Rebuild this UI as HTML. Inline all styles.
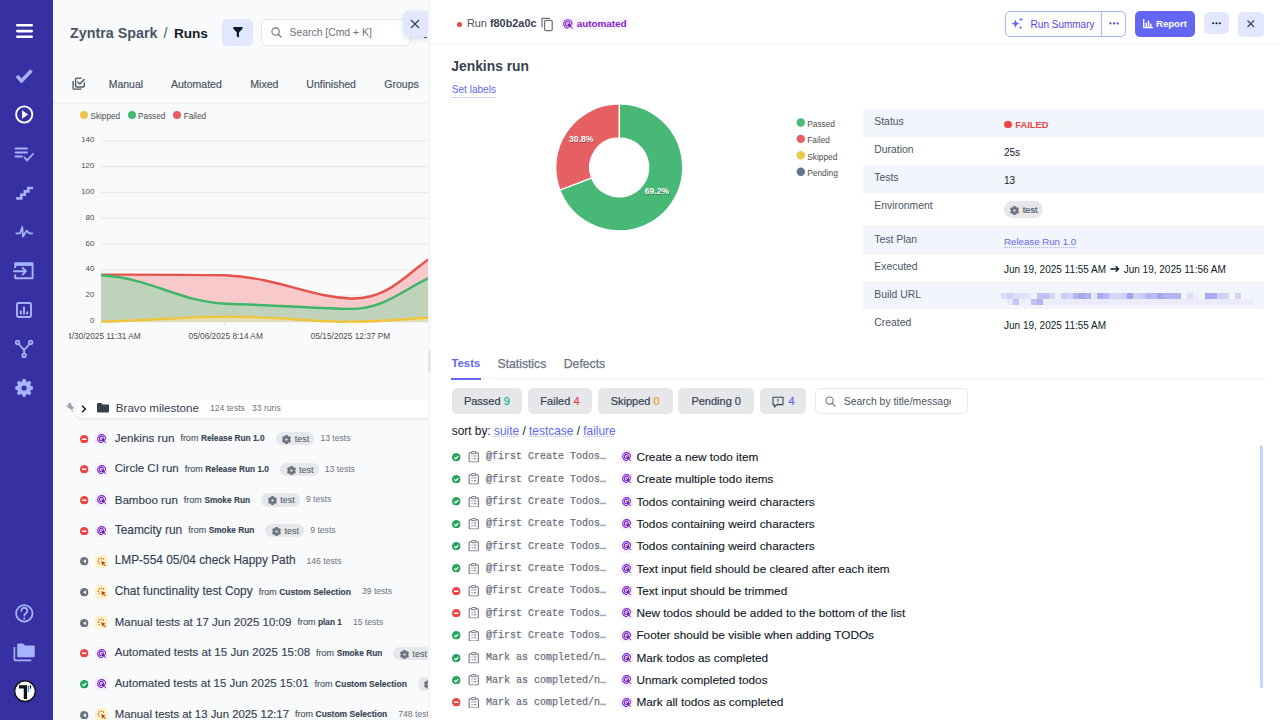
<!DOCTYPE html>
<html><head><meta charset="utf-8">
<style>
*{box-sizing:border-box;margin:0;padding:0}
html,body{width:1280px;height:720px;overflow:hidden;background:#f9fafb;font-family:"Liberation Sans",sans-serif;color:#374151}
.a{position:absolute}
.nw{white-space:nowrap}
#side{left:0;top:0;width:53px;height:720px;background:#3730a3}
#left{left:53px;top:0;width:375px;height:720px;background:#f9fafb;overflow:hidden}
#strip{left:428px;top:0;width:3px;height:720px;background:#f7f7f8}
#right{left:431px;top:0;width:849px;height:720px;background:#fff;overflow:hidden}

.tab{top:78px;font-size:10.5px;color:#4b5563;line-height:13px;-webkit-text-stroke:0.2px #4b5563}
.leg{top:110.8px;font-size:8.2px;color:#4d4d4d;line-height:11px}
.row{left:0;width:375px;height:20px}
.ib{left:42px;top:3.3px;width:13.3px;height:13.3px;border-radius:4px;display:flex;align-items:center;justify-content:center}
.rl{left:61.7px;top:1.8px;line-height:15px;display:flex;align-items:center}
.rt{font-size:11.6px;color:#374151;-webkit-text-stroke:0.15px #374151}
.rf{font-size:9px;color:#4b5563;margin-left:6px;position:relative;top:0.9px;-webkit-text-stroke:0.15px #4b5563}
.rf b{font-size:8.3px;color:#374151;font-weight:700}
.rb{display:inline-flex;align-items:center;gap:3.6px;height:13.3px;padding:0 5.2px 0 6.6px;background:#e5e7eb;border-radius:7px;font-size:9px;color:#4b5563;margin-left:11px;position:relative;top:0.7px}
.rc{font-size:8.6px;color:#6b7280;margin-left:11px;position:relative;top:0.6px}
.rb+.rc{margin-left:6px}

.lbl{font-size:10.4px;color:#4b5563;line-height:13px}
.val{font-size:10px;color:#111827;line-height:13px}

.tb2{top:356.6px;font-size:12.2px;line-height:14px;color:#6b7280;-webkit-text-stroke:0.25px #6b7280}
.chip{top:387.5px;height:26.3px;background:#e5e7eb;border-radius:5px;display:flex;align-items:center;justify-content:center;font-size:11px;color:#374151;white-space:nowrap;-webkit-text-stroke:0.2px currentColor}
.lk{color:#6366f1;text-decoration:underline dotted #a5b4fc;text-decoration-thickness:1px;text-underline-offset:1.3px}
.mono{font-family:"Liberation Mono",monospace;font-size:10px;line-height:13px;color:#6b7280;-webkit-text-stroke:0.25px #6b7280}
.ib2{width:13.3px;height:13.3px;border-radius:4px;background:#f7f1ff;display:flex;align-items:center;justify-content:center}
.ttl{font-size:11.8px;line-height:15px;color:#111827;-webkit-text-stroke:0.12px #111827}
</style></head><body>
<div id="side" class="a"><svg width="53" height="720" viewBox="0 0 53 720" style="position:absolute;left:0;top:0">
<g fill="#fff"><rect x="16" y="24" width="17" height="2.6" rx="1.3"/><rect x="16" y="29.8" width="17" height="2.6" rx="1.3"/><rect x="16" y="35.5" width="17" height="2.6" rx="1.3"/></g>
<path d="M17 76 L21.5 81 L31.5 70.5" stroke="#a5b4fc" stroke-width="3.4" fill="none" stroke-linecap="butt" stroke-linejoin="miter"/>
<circle cx="24.2" cy="114.5" r="8.1" stroke="#fff" stroke-width="1.9" fill="none"/>
<path d="M22 110.3 L28.2 114.5 L22 118.7 Z" fill="#fff"/>
<g stroke="#a5b4fc" stroke-width="1.8" fill="none" stroke-linecap="round"><path d="M15.5 148.5 H27"/><path d="M15.5 152.5 H27"/><path d="M15.5 156.5 H22"/><path d="M24.5 157.5 L27 160.3 L33 154"/></g>
<path d="M16.2 198.4 H21.3 V194.8 H24.8 V191.4 H28.3 V188 H33" stroke="#a5b4fc" stroke-width="2.6" fill="none" stroke-linejoin="miter"/>
<path d="M16.3 233.3 H20 L22.3 227 L23 236.5 L26.6 230.6 L29.3 233.3 H32.2" stroke="#a5b4fc" stroke-width="1.8" fill="none" stroke-linejoin="round" stroke-linecap="round"/>
<g stroke="#a5b4fc" stroke-width="1.9" fill="none" stroke-linejoin="round"><path d="M15.2 268 V263.2 H32.6 V278.3 H15.2 V274.5"/><path d="M15.2 264.6 H32.6" stroke-width="2.6"/><path d="M14 271.2 H26 M22.6 267.8 L26 271.2 L22.6 274.6" stroke-linecap="round"/></g>
<g stroke="#a5b4fc" stroke-width="1.9" fill="none"><rect x="17" y="303" width="14" height="14" rx="1.2"/><path d="M20.8 314.5 V310.5 M24 314.5 V306.5 M27.2 314.5 V311.5"/></g>
<g stroke="#a5b4fc" stroke-width="1.8" fill="none"><circle cx="17.6" cy="342.4" r="1.8"/><circle cx="30.6" cy="342.4" r="1.8"/><circle cx="24.1" cy="355.4" r="1.8"/><path d="M18.6 344 L24.1 350.2 L29.6 344 M24.1 350.2 V353.6"/></g>
<g fill="#a5b4fc" transform="translate(24.1 386.2) scale(0.8) translate(-24.1 -388.1)"><path d="M22.3 379.2 h3.6 l0.6 2.6 l1.9 0.8 l2.3 -1.4 l2.5 2.5 l-1.4 2.3 l0.8 1.9 l2.6 0.6 v3.6 l-2.6 0.6 l-0.8 1.9 l1.4 2.3 l-2.5 2.5 l-2.3 -1.4 l-1.9 0.8 l-0.6 2.6 h-3.6 l-0.6 -2.6 l-1.9 -0.8 l-2.3 1.4 l-2.5 -2.5 l1.4 -2.3 l-0.8 -1.9 l-2.6 -0.6 v-3.6 l2.6 -0.6 l0.8 -1.9 l-1.4 -2.3 l2.5 -2.5 l2.3 1.4 l1.9 -0.8 Z"/></g>
<circle cx="24.1" cy="388" r="2.6" fill="#3730a3"/>
<circle cx="24.3" cy="613.4" r="8.2" stroke="#a5b4fc" stroke-width="1.8" fill="none"/>
<path d="M21.3 610.8 a3 3 0 1 1 4.6 2.5 c-1 0.6 -1.6 1.1 -1.6 2.3" stroke="#a5b4fc" stroke-width="1.8" fill="none" stroke-linecap="round"/>
<circle cx="24.3" cy="618.6" r="1.1" fill="#a5b4fc"/>
<path d="M17.2 644.8 a1.3 1.3 0 0 1 1.3 -1.3 h4.6 l1.8 2 h8.5 a1.3 1.3 0 0 1 1.3 1.3 v9.1 a1.3 1.3 0 0 1 -1.3 1.3 h-14.9 a1.3 1.3 0 0 1 -1.3 -1.3 Z" fill="#a5b4fc"/>
<path d="M14.4 647 V659.2 a1.2 1.2 0 0 0 1.2 1.2 H31.2" stroke="#a5b4fc" stroke-width="1.6" fill="none"/>
<circle cx="25" cy="691.2" r="10.3" fill="#fff" stroke="#111" stroke-width="1.3"/>
<path d="M19 685.2 H27.1 V698.9 H23.75 V688.5 H19 Z" fill="#111"/>
<rect x="27.9" y="685.4" width="1.3" height="6.4" fill="#3b82f6"/><rect x="30" y="685.4" width="1.1" height="3.3" fill="#111"/>
</svg></div>
<svg width="0" height="0" style="position:absolute"><defs>
<symbol id="auto" viewBox="0 0 10 10"><path d="M9.1 4.9 A4.2 4.2 0 1 0 4.9 9.1" stroke="#7e22ce" stroke-width="1.15" fill="none" stroke-linecap="round"/><path d="M6.9 4.6 A2.2 2.2 0 1 0 4.6 6.9" stroke="#7e22ce" stroke-width="1.15" fill="none" stroke-linecap="round"/><path d="M4.3 4.3 L9.5 6.0 L7.6 7.0 L9.9 9.3 L9.3 9.9 L7.0 7.6 L6.0 9.5 Z" fill="#6b21a8"/></symbol>
<symbol id="manual" viewBox="0 0 10 10"><g fill="#c2410c"><circle cx="2.2" cy="2" r="0.75"/><circle cx="4.6" cy="1.3" r="0.7"/><circle cx="6.9" cy="2.1" r="0.7"/><circle cx="1.3" cy="4.4" r="0.75"/><circle cx="2.3" cy="6.7" r="0.75"/><path d="M4.3 4.2 L9.2 6 L7.2 6.9 L9.6 9.3 L9 9.9 L6.6 7.5 L5.8 9.4 Z"/></g></symbol>
<symbol id="failc" viewBox="0 0 10 10"><circle cx="5" cy="5" r="5" fill="#ef4444"/><rect x="2.3" y="4.2" width="5.4" height="1.6" rx="0.5" fill="#fff"/></symbol>
<symbol id="passc" viewBox="0 0 10 10"><circle cx="5" cy="5" r="5" fill="#23a55e"/><path d="M2.7 5.1 L4.3 6.7 L7.4 3.6" stroke="#fff" stroke-width="1.5" fill="none"/></symbol>
<symbol id="skipc" viewBox="0 0 10 10"><circle cx="5" cy="5" r="5" fill="#6b7280"/><path d="M7 2.6 L7 7.4 L3.6 5 Z" fill="#fff"/></symbol>
<symbol id="gear" viewBox="0 0 20 20"><path fill="#6b7280" stroke="#6b7280" stroke-width="1" stroke-linejoin="round" fill-rule="evenodd" d="M7.13 2.75 L7.92 0.22 L12.08 0.22 L12.87 2.75 L14.84 3.89 L17.43 3.31 L19.51 6.91 L17.72 8.86 L17.72 11.14 L19.51 13.09 L17.43 16.69 L14.84 16.11 L12.87 17.25 L12.08 19.78 L7.92 19.78 L7.13 17.25 L5.16 16.11 L2.57 16.69 L0.49 13.09 L2.28 11.14 L2.28 8.86 L0.49 6.91 L2.57 3.31 L5.16 3.89 Z M10 7 A3 3 0 1 0 10.01 7 Z"/></symbol>
<symbol id="clip" viewBox="0 0 12 12"><rect x="1.2" y="1.8" width="9.6" height="9.6" rx="1" stroke="#6b7280" stroke-width="1.1" fill="none"/><rect x="3.8" y="0.6" width="4.4" height="2.2" rx="0.5" stroke="#6b7280" stroke-width="1" fill="#fff"/><path d="M3.6 5.2h1.3M3.6 8h1.3M6.2 5.2h2.4M6.2 8h2.4" stroke="#6b7280" stroke-width="1.1"/></symbol>
</defs></svg><div id="left" class="a">
<div class="a nw" style="left:17px;top:24px;font-size:14.3px;font-weight:700;color:#4b5563;line-height:18px">Zyntra Spark<span style="font-weight:400;color:#4b5563;margin:0 0 0 6px">/</span><span style="color:#111827;font-size:13.6px;margin-left:6.5px">Runs</span></div>
<div class="a" style="left:169px;top:19px;width:31px;height:26.5px;background:#e0e7ff;border-radius:5px"><svg class="a" style="left:10.6px;top:8.4px" width="10" height="11" viewBox="0 0 10 11"><path d="M0.3 0 H9.5 V1.7 L6 5.6 V10.6 L3.8 9.6 V5.6 L0.3 1.7 Z" fill="#111827"/></svg></div>
<div class="a" style="left:208px;top:19.3px;width:149.5px;height:26.4px;background:#fff;border:1px solid #e5e7eb;border-radius:6px"><svg class="a" style="left:8.7px;top:6.6px" width="11" height="11" viewBox="0 0 11 11"><circle cx="4.6" cy="4.6" r="3.7" stroke="#6b7280" stroke-width="1.1" fill="none"/><path d="M7.3 7.3 L10 10" stroke="#6b7280" stroke-width="1.2" stroke-linecap="round"/></svg><span class="a nw" style="left:27.5px;top:5.5px;font-size:10.4px;color:#6b7280;line-height:13px">Search [Cmd + K]</span></div>
<div class="a" style="left:350px;top:11.2px;width:28px;height:25.5px;background:#e0e7ff;border-radius:6px 0 0 6px;box-shadow:0 2px 5px rgba(0,0,0,0.12)"><svg class="a" style="left:6.6px;top:7.6px" width="10" height="10" viewBox="0 0 10 10"><path d="M1 1 L9 9 M9 1 L1 9" stroke="#374151" stroke-width="1.2"/></svg></div>
<div class="a" style="left:371px;top:36.7px;width:3px;height:1px;background:#4b5563"></div>

<svg class="a" style="left:18.9px;top:76.8px" width="14" height="14" viewBox="0 0 14 14"><g stroke="#4b5563" stroke-width="1.35" fill="none" stroke-linecap="round" stroke-linejoin="round"><path d="M9.2 1.1 H4.8 a1.2 1.2 0 0 0 -1.2 1.2 V8.8 a1.2 1.2 0 0 0 1.2 1.2 H11.1 a1.2 1.2 0 0 0 1.2 -1.2 V5.9"/><path d="M5.8 4.9 L7.9 6.9 L12.2 2.6"/><path d="M1.1 4.3 V10.9 a1.2 1.2 0 0 0 1.2 1.2 H9"/></g></svg>
<div class="a nw tab" style="left:55.7px">Manual</div>
<div class="a nw tab" style="left:118px">Automated</div>
<div class="a nw tab" style="left:197.3px">Mixed</div>
<div class="a nw tab" style="left:253.3px">Unfinished</div>
<div class="a nw tab" style="left:331.3px">Groups</div>
<div class="a" style="left:0;top:103px;width:375px;height:1px;background:#eceef1"></div>

<div class="a" style="left:27px;top:111px;width:8.2px;height:8.2px;border-radius:50%;background:#edc44a"></div>
<div class="a nw leg" style="left:37.5px">Skipped</div>
<div class="a" style="left:74.7px;top:111px;width:8.2px;height:8.2px;border-radius:50%;background:#41b86e"></div>
<div class="a nw leg" style="left:85px">Passed</div>
<div class="a" style="left:119.8px;top:111px;width:8.2px;height:8.2px;border-radius:50%;background:#e85d61"></div>
<div class="a nw leg" style="left:130.7px">Failed</div>

<div id="chart" class="a" style="left:16px;top:125px;width:359px;height:225px;overflow:hidden"><svg width="359" height="225" viewBox="0 0 359 225" style="position:absolute;left:0;top:0;font-family:'Liberation Sans',sans-serif"><line x1="32" x2="371" y1="15.8" y2="15.8" stroke="#e5e7eb" stroke-width="1"/><text x="25.5" y="17.1" text-anchor="end" font-size="8" fill="#4d4d4d">140</text><line x1="32" x2="371" y1="41.6" y2="41.6" stroke="#e5e7eb" stroke-width="1"/><text x="25.5" y="42.9" text-anchor="end" font-size="8" fill="#4d4d4d">120</text><line x1="32" x2="371" y1="67.5" y2="67.5" stroke="#e5e7eb" stroke-width="1"/><text x="25.5" y="68.8" text-anchor="end" font-size="8" fill="#4d4d4d">100</text><line x1="32" x2="371" y1="93.3" y2="93.3" stroke="#e5e7eb" stroke-width="1"/><text x="25.5" y="94.6" text-anchor="end" font-size="8" fill="#4d4d4d">80</text><line x1="32" x2="371" y1="119.2" y2="119.2" stroke="#e5e7eb" stroke-width="1"/><text x="25.5" y="120.5" text-anchor="end" font-size="8" fill="#4d4d4d">60</text><line x1="32" x2="371" y1="145.0" y2="145.0" stroke="#e5e7eb" stroke-width="1"/><text x="25.5" y="146.3" text-anchor="end" font-size="8" fill="#4d4d4d">40</text><line x1="32" x2="371" y1="170.9" y2="170.9" stroke="#e5e7eb" stroke-width="1"/><text x="25.5" y="172.2" text-anchor="end" font-size="8" fill="#4d4d4d">20</text><line x1="32" x2="371" y1="196.8" y2="196.8" stroke="#e5e7eb" stroke-width="1"/><text x="25.5" y="198.1" text-anchor="end" font-size="8" fill="#4d4d4d">0</text>
<path d="M 32.0 149.6 C 81.0 149.6 121.0 149.5 156.0 150.3 C 211.0 152.9 241.0 172.2 281.6 173.5 C 321.0 174.8 341.0 145.1 363.0 132.2 L363 196.8 L32 196.8 Z" fill="#f7c9ca"/>
<path d="M 32.0 150.3 C 81.0 152.9 111.0 176.8 156.0 178.7 C 211.0 180.0 251.0 183.9 281.6 183.9 C 316.0 183.9 336.0 163.2 363.0 151.6 L363 196.8 L32 196.8 Z" fill="#bfd3bb"/>
<path d="M 32.0 196.8 C 91.0 194.9 121.0 191.6 156.0 191.6 C 211.0 191.6 241.0 196.8 281.6 196.8 C 321.0 196.8 341.0 192.9 363.0 192.7 L363 196.8 L32 196.8 Z" fill="#e4e0b3"/>
<path d="M 32.0 149.6 C 81.0 149.6 121.0 149.5 156.0 150.3 C 211.0 152.9 241.0 172.2 281.6 173.5 C 321.0 174.8 341.0 145.1 363.0 132.2" stroke="#e5534b" stroke-width="2.4" fill="none"/>
<path d="M 32.0 150.3 C 81.0 152.9 111.0 176.8 156.0 178.7 C 211.0 180.0 251.0 183.9 281.6 183.9 C 316.0 183.9 336.0 163.2 363.0 151.6" stroke="#3fb569" stroke-width="2.4" fill="none"/>
<path d="M 32.0 196.8 C 91.0 194.9 121.0 191.6 156.0 191.6 C 211.0 191.6 241.0 196.8 281.6 196.8 C 321.0 196.8 341.0 192.9 363.0 192.7" stroke="#f0c43c" stroke-width="2.4" fill="none"/>
<g stroke="#e5e7eb" stroke-width="1"><line x1="32" x2="32" y1="196.8" y2="201"/><line x1="156" x2="156" y1="196.8" y2="201"/><line x1="281.6" x2="281.6" y1="196.8" y2="201"/></g>
<g font-size="8.3" fill="#4d4d4d" text-anchor="middle"><text x="32.6" y="214.3">04/30/2025 11:31 AM</text><text x="156.7" y="214.3">05/06/2025 8:14 AM</text><text x="281.5" y="214.3">05/15/2025 12:37 PM</text></g>
</svg></div>

<div class="a" style="left:23.3px;top:398.8px;width:360px;height:19px;background:#fff;border-radius:5px;box-shadow:0 1px 3px rgba(0,0,0,0.1)"></div>
<svg class="a" style="left:12px;top:402px" width="10" height="11" viewBox="0 0 10 11"><polygon points="3.3,1.4 5.6,1.0 6.2,3.6 8.9,6.0 6.8,7.0 4.6,6.4 1.6,3.8 3.9,3.2" fill="#9ca3af" stroke="#9ca3af" stroke-width="0.6" stroke-linejoin="round"/><path d="M6.2 6.6 L7.8 9.6" stroke="#9ca3af" stroke-width="1"/></svg>
<svg class="a" style="left:28px;top:404.8px" width="6" height="8" viewBox="0 0 6 8"><path d="M1 0.8 L4.4 4 L1 7.2" stroke="#111827" stroke-width="1.4" fill="none"/></svg>
<svg class="a" style="left:43.7px;top:403.3px" width="12" height="9.5" viewBox="0 0 12 9.5"><path d="M0 1 a1 1 0 0 1 1 -1 H4.4 L5.6 1.4 H11 a1 1 0 0 1 1 1 V8.5 a1 1 0 0 1 -1 1 H1 a1 1 0 0 1 -1 -1 Z" fill="#374151"/></svg>
<div class="a nw" style="left:62.8px;top:400.7px;font-size:11.6px;color:#374151;line-height:14px">Bravo milestone</div>
<div class="a nw" style="left:157px;top:402.5px;font-size:8.6px;color:#6b7280;line-height:11px">124 tests&nbsp;&nbsp;&nbsp;33 runs</div>
<div class="a row" style="top:428.70px"><svg class="a" style="left:27px;top:6px" width="8.5" height="8.5"><use href="#failc"/></svg><div class="a ib" style="background:#f7f1ff"><svg width="9.5" height="9.5"><use href="#auto"/></svg></div><div class="a rl nw"><span class="rt" style="font-size:11.68px">Jenkins run</span><span class="rf">from <b>Release Run 1.0</b></span><span class="rb"><svg width="9" height="9" style="position:relative;top:0.9px"><use href="#gear"/></svg><span style="position:relative;top:0.8px">test</span></span><span class="rc">13 tests</span></div></div>
<div class="a row" style="top:459.37px"><svg class="a" style="left:27px;top:6px" width="8.5" height="8.5"><use href="#failc"/></svg><div class="a ib" style="background:#f7f1ff"><svg width="9.5" height="9.5"><use href="#auto"/></svg></div><div class="a rl nw"><span class="rt" style="font-size:11.54px">Circle CI run</span><span class="rf">from <b>Release Run 1.0</b></span><span class="rb"><svg width="9" height="9" style="position:relative;top:0.9px"><use href="#gear"/></svg><span style="position:relative;top:0.8px">test</span></span><span class="rc">13 tests</span></div></div>
<div class="a row" style="top:490.04px"><svg class="a" style="left:27px;top:6px" width="8.5" height="8.5"><use href="#failc"/></svg><div class="a ib" style="background:#f7f1ff"><svg width="9.5" height="9.5"><use href="#auto"/></svg></div><div class="a rl nw"><span class="rt" style="font-size:11.60px">Bamboo run</span><span class="rf">from <b>Smoke Run</b></span><span class="rb"><svg width="9" height="9" style="position:relative;top:0.9px"><use href="#gear"/></svg><span style="position:relative;top:0.8px">test</span></span><span class="rc">9 tests</span></div></div>
<div class="a row" style="top:520.71px"><svg class="a" style="left:27px;top:6px" width="8.5" height="8.5"><use href="#failc"/></svg><div class="a ib" style="background:#f7f1ff"><svg width="9.5" height="9.5"><use href="#auto"/></svg></div><div class="a rl nw"><span class="rt" style="font-size:11.91px">Teamcity run</span><span class="rf">from <b>Smoke Run</b></span><span class="rb"><svg width="9" height="9" style="position:relative;top:0.9px"><use href="#gear"/></svg><span style="position:relative;top:0.8px">test</span></span><span class="rc">9 tests</span></div></div>
<div class="a row" style="top:551.38px"><svg class="a" style="left:27px;top:6px" width="8.5" height="8.5"><use href="#skipc"/></svg><div class="a ib" style="background:#fef3c7"><svg width="9.5" height="9.5"><use href="#manual"/></svg></div><div class="a rl nw"><span class="rt" style="font-size:11.88px">LMP-554 05/04 check Happy Path</span><span class="rc">146 tests</span></div></div>
<div class="a row" style="top:582.05px"><svg class="a" style="left:27px;top:6px" width="8.5" height="8.5"><use href="#skipc"/></svg><div class="a ib" style="background:#fef3c7"><svg width="9.5" height="9.5"><use href="#manual"/></svg></div><div class="a rl nw"><span class="rt" style="font-size:11.88px">Chat functinality test Copy</span><span class="rf">from <b style="font-size:8.5px">Custom Selection</b></span><span class="rc">39 tests</span></div></div>
<div class="a row" style="top:612.72px"><svg class="a" style="left:27px;top:6px" width="8.5" height="8.5"><use href="#skipc"/></svg><div class="a ib" style="background:#fef3c7"><svg width="9.5" height="9.5"><use href="#manual"/></svg></div><div class="a rl nw"><span class="rt" style="font-size:11.53px">Manual tests at 17 Jun 2025 10:09</span><span class="rf">from <b>plan 1</b></span><span class="rc">15 tests</span></div></div>
<div class="a row" style="top:643.39px"><svg class="a" style="left:27px;top:6px" width="8.5" height="8.5"><use href="#failc"/></svg><div class="a ib" style="background:#f7f1ff"><svg width="9.5" height="9.5"><use href="#auto"/></svg></div><div class="a rl nw"><span class="rt" style="font-size:11.57px">Automated tests at 15 Jun 2025 15:08</span><span class="rf">from <b>Smoke Run</b></span><span class="rb"><svg width="9" height="9" style="position:relative;top:0.9px"><use href="#gear"/></svg><span style="position:relative;top:0.8px">test</span></span><span class="rc">13 tests</span></div></div>
<div class="a row" style="top:674.06px"><svg class="a" style="left:27px;top:6px" width="8.5" height="8.5"><use href="#passc"/></svg><div class="a ib" style="background:#f7f1ff"><svg width="9.5" height="9.5"><use href="#auto"/></svg></div><div class="a rl nw"><span class="rt" style="font-size:11.47px">Automated tests at 15 Jun 2025 15:01</span><span class="rf">from <b style="font-size:8.5px">Custom Selection</b></span><span class="rb"><svg width="9" height="9" style="position:relative;top:0.9px"><use href="#gear"/></svg><span style="position:relative;top:0.8px">test</span></span><span class="rc">13 tests</span></div></div>
<div class="a row" style="top:704.73px"><svg class="a" style="left:27px;top:6px" width="8.5" height="8.5"><use href="#skipc"/></svg><div class="a ib" style="background:#fef3c7"><svg width="9.5" height="9.5"><use href="#manual"/></svg></div><div class="a rl nw"><span class="rt" style="font-size:11.36px">Manual tests at 13 Jun 2025 12:17</span><span class="rf">from <b style="font-size:8.5px">Custom Selection</b></span><span class="rc">748 tests</span></div></div>

</div>
<div id="strip" class="a"><div class="a" style="left:0;top:350px;width:3px;height:21.7px;background:#e5e6ea;border-radius:1.5px"></div></div>
<div id="right" class="a">
<div class="a" style="left:26.2px;top:21.9px;width:5.2px;height:5.2px;border-radius:50%;background:#ef4444"></div>
<div class="a nw" style="left:35.9px;top:17px;font-size:10.9px;line-height:13px;color:#4b5563">Run <b style="color:#374151">f80b2a0c</b></div>
<svg class="a" style="left:109.5px;top:17px" width="13" height="15" viewBox="0 0 13 15"><path d="M1 9.7 V1.3 H8.6" stroke="#6b7280" stroke-width="1.25" fill="none" stroke-linecap="round"/><rect x="3.6" y="3.3" width="7.6" height="10.3" rx="1.3" stroke="#6b7280" stroke-width="1.25" fill="none"/></svg>
<div class="a" style="left:129.0px;top:16.7px;width:69.4px;height:13.6px;border-radius:4px;background:#faf5ff"></div>
<svg class="a" style="left:132.2px;top:18.6px" width="10" height="10"><use href="#auto"/></svg>
<div class="a nw" style="left:145.7px;top:17.2px;font-size:9.9px;line-height:13px;color:#7e22ce;font-weight:700">automated</div>
<div class="a" style="left:0;top:44.3px;width:849px;height:1px;background:#f3f4f6"></div>

<div class="a" style="left:573.6px;top:11.3px;width:121.6px;height:25.3px;border:1px solid #a5b4fc;border-radius:5px"></div>
<div class="a" style="left:669.6px;top:11.3px;width:1px;height:25.3px;background:#a5b4fc"></div>
<svg class="a" style="left:579.5px;top:17px" width="13" height="13" viewBox="0 0 13 13"><path d="M4.5 2.5 L5.6 5.6 L8.7 6.7 L5.6 7.8 L4.5 10.9 L3.4 7.8 L0.3 6.7 L3.4 5.6 Z" fill="#6366f1"/><path d="M10 0.3 L10.6 1.9 L12.2 2.5 L10.6 3.1 L10 4.7 L9.4 3.1 L7.8 2.5 L9.4 1.9 Z" fill="#6366f1"/><path d="M9.6 8.8 L10.1 10.1 L11.4 10.6 L10.1 11.1 L9.6 12.4 L9.1 11.1 L7.8 10.6 L9.1 10.1 Z" fill="#6366f1"/></svg>
<div class="a nw" style="left:599.6px;top:17.5px;font-size:10px;line-height:13px;color:#4f46e5">Run Summary</div>
<svg class="a" style="left:677.5px;top:22.2px" width="10" height="3"><circle cx="1.4" cy="1.4" r="1.1" fill="#4f46e5"/><circle cx="5" cy="1.4" r="1.1" fill="#4f46e5"/><circle cx="8.6" cy="1.4" r="1.1" fill="#4f46e5"/></svg>
<div class="a" style="left:704.0px;top:11.3px;width:60.4px;height:25.3px;border-radius:5px;background:#6366f1"></div>
<svg class="a" style="left:712px;top:19.3px" width="10" height="9.5" viewBox="0 0 10 9.5"><path d="M0.7 0.3 V8.6 H9.6" stroke="#fff" stroke-width="1.3" fill="none" stroke-linecap="round"/><path d="M3.2 7.9 V4.2 M5.5 7.9 V2.3 M7.8 7.9 V5.2" stroke="#fff" stroke-width="1.5" stroke-linecap="round"/></svg>
<div class="a nw" style="left:725.0px;top:16.6px;font-size:9.6px;line-height:13px;color:#fff;font-weight:700">Report</div>
<div class="a" style="left:772.8px;top:11.7px;width:25.7px;height:22.8px;border-radius:5px;background:#e0e7ff"></div>
<svg class="a" style="left:781.3px;top:21.5px" width="9" height="3"><circle cx="1.2" cy="1.2" r="1.05" fill="#111827"/><circle cx="4.5" cy="1.2" r="1.05" fill="#111827"/><circle cx="7.8" cy="1.2" r="1.05" fill="#111827"/></svg>
<div class="a" style="left:807.4px;top:11.7px;width:25.3px;height:24.9px;border-radius:5px;background:#e0e7ff"><svg class="a" style="left:9px;top:8.7px" width="7.5" height="7.5" viewBox="0 0 7.5 7.5"><path d="M0.5 0.5 L7 7 M7 0.5 L0.5 7" stroke="#374151" stroke-width="1.1"/></svg></div>

<div class="a nw" style="left:20.3px;top:57.8px;font-size:13.85px;line-height:17px;color:#374151;font-weight:700">Jenkins run</div>
<div class="a nw" style="left:20.7px;top:84.1px;font-size:10.1px;line-height:12px;color:#6366f1;border-bottom:1px dotted #a5b4fc;padding-bottom:1px">Set labels</div>
<svg class="a" style="left:0;top:0" width="849" height="340" viewBox="0 0 849 340" font-family="Liberation Sans, sans-serif">
<path d="M188.20 103.90 A63.5 63.5 0 1 1 128.87 190.03 L160.64 177.91 A29.5 29.5 0 1 0 188.20 137.90 Z" fill="#48b876" stroke="#fff" stroke-width="1.3"/>
<path d="M128.87 190.03 A63.5 63.5 0 0 1 188.20 103.90 L188.20 137.90 A29.5 29.5 0 0 0 160.64 177.91 Z" fill="#e65f62" stroke="#fff" stroke-width="1.3"/>
<g font-size="8.6" font-weight="bold" text-anchor="middle"><text x="150.7" y="142.5" fill="rgba(0,0,0,0.35)">30.8%</text><text x="226.5" y="194.9" fill="rgba(0,0,0,0.35)">69.2%</text><text x="150.20000000000005" y="141.8" fill="#fff">30.8%</text><text x="226" y="194.2" fill="#fff">69.2%</text></g>
<g font-size="8.3" fill="#4d4d4d"><circle cx="369.79999999999995" cy="122.5" r="4.2" fill="#48bb78"/><text x="376.29999999999995" y="126.7">Passed</text>
<circle cx="369.79999999999995" cy="138.9" r="4.2" fill="#e85d61"/><text x="376.29999999999995" y="143.1">Failed</text>
<circle cx="369.79999999999995" cy="155.3" r="4.2" fill="#ecc94b"/><text x="376.29999999999995" y="159.5">Skipped</text>
<circle cx="369.79999999999995" cy="171.7" r="4.2" fill="#64748b"/><text x="376.29999999999995" y="175.9">Pending</text></g>
</svg><div class="a" style="left:432.0px;top:109px;width:400.5px;height:27.6px;background:#f2f5fc"></div><div class="a nw lbl" style="left:443.3px;top:115.2px">Status</div><div class="a nw lbl" style="left:443.3px;top:142.8px">Duration</div><div class="a" style="left:432.0px;top:165px;width:400.5px;height:27.9px;background:#f2f5fc"></div><div class="a nw lbl" style="left:443.3px;top:171.2px">Tests</div><div class="a nw lbl" style="left:443.3px;top:199.1px">Environment</div><div class="a" style="left:432.0px;top:226.3px;width:400.5px;height:27.7px;background:#f2f5fc"></div><div class="a nw lbl" style="left:443.3px;top:232.5px">Test Plan</div><div class="a nw lbl" style="left:443.3px;top:260.2px">Executed</div><div class="a" style="left:432.0px;top:281.7px;width:400.5px;height:27.6px;background:#f2f5fc"></div><div class="a nw lbl" style="left:443.3px;top:287.9px">Build URL</div><div class="a nw lbl" style="left:443.3px;top:315.5px">Created</div>
<div class="a" style="left:573.4px;top:120.9px;width:7.2px;height:7.2px;border-radius:50%;background:#ef4444"></div>
<div class="a nw val" style="left:584.2px;top:118px;color:#ef4444;font-weight:700;font-size:9.4px">FAILED</div>
<div class="a nw val" style="left:573.0px;top:146.3px">25s</div>
<div class="a nw val" style="left:573.0px;top:174.2px">13</div>
<div class="a nw" style="left:572.9px;top:201px;height:16.8px;width:39px;border-radius:9px;background:#e5e7eb;"><svg class="a" style="left:6.3px;top:4.6px" width="9" height="9"><use href="#gear"/></svg><span class="a" style="left:18.9px;top:3px;font-size:9.2px;color:#4b5563;line-height:12px;-webkit-text-stroke:0.15px #4b5563">test</span></div>
<div class="a nw val" style="left:573.0px;top:235.5px;color:#6366f1;font-size:9.7px;border-bottom:1px dotted #a5b4fc;line-height:11px;padding-bottom:0.5px">Release Run 1.0</div>
<div class="a nw val" style="left:573.0px;top:263px">Jun 19, 2025 11:55 AM <svg width="10" height="8" viewBox="0 0 10 8" style="vertical-align:0px;margin:0 1px"><path d="M0.5 4 H8.3 M5.6 1.3 L8.6 4 L5.6 6.7" stroke="#111827" stroke-width="1.3" fill="none"/></svg> Jun 19, 2025 11:56 AM</div>
<div class="a nw val" style="left:573.0px;top:318.8px">Jun 19, 2025 11:55 AM</div>

<svg class="a" style="left:570.3px;top:292.9px" width="252" height="12" viewBox="0 0 252 12" shape-rendering="crispEdges"><rect x="0" y="0" width="6" height="6" fill="#dcdcf7"/><rect x="6" y="0" width="6" height="6" fill="#cfd0f6"/><rect x="12" y="0" width="6" height="6" fill="#dfe0f8"/><rect x="18" y="0" width="6" height="6" fill="#e0e1f8"/><rect x="24" y="0" width="6" height="6" fill="#e4e5f9"/><rect x="30" y="0" width="6" height="6" fill="#f3f3fc"/><rect x="36" y="0" width="6" height="6" fill="#bfc1f3"/><rect x="42" y="0" width="6" height="6" fill="#bfc1f3"/><rect x="48" y="0" width="6" height="6" fill="#d3d4f6"/><rect x="54" y="0" width="6" height="6" fill="#f0f1fc"/><rect x="60" y="0" width="6" height="6" fill="#c9caf5"/><rect x="66" y="0" width="6" height="6" fill="#d5d6f7"/><rect x="72" y="0" width="6" height="6" fill="#b3b5f1"/><rect x="78" y="0" width="6" height="6" fill="#a3a6ef"/><rect x="84" y="0" width="6" height="6" fill="#b1b3f1"/><rect x="90" y="0" width="6" height="6" fill="#e6e7f9"/><rect x="96" y="0" width="6" height="6" fill="#a8abf0"/><rect x="102" y="0" width="6" height="6" fill="#b6b8f2"/><rect x="108" y="0" width="6" height="6" fill="#d3d4f6"/><rect x="114" y="0" width="6" height="6" fill="#d6d7f7"/><rect x="120" y="0" width="6" height="6" fill="#cfd0f6"/><rect x="126" y="0" width="6" height="6" fill="#9fa2ee"/><rect x="132" y="0" width="6" height="6" fill="#d0d1f6"/><rect x="138" y="0" width="6" height="6" fill="#cbccf5"/><rect x="144" y="0" width="6" height="6" fill="#b5b7f2"/><rect x="150" y="0" width="6" height="6" fill="#b8baf2"/><rect x="156" y="0" width="6" height="6" fill="#a3a6ef"/><rect x="162" y="0" width="6" height="6" fill="#b0b2f1"/><rect x="168" y="0" width="6" height="6" fill="#b3b5f1"/><rect x="174" y="0" width="6" height="6" fill="#b3b5f1"/><rect x="180" y="0" width="6" height="6" fill="#f2f3fc"/><rect x="186" y="0" width="6" height="6" fill="#dedff8"/><rect x="192" y="0" width="6" height="6" fill="#eeeffb"/><rect x="198" y="0" width="6" height="6" fill="#f2f3fc"/><rect x="204" y="0" width="6" height="6" fill="#a5a8ef"/><rect x="210" y="0" width="6" height="6" fill="#a9acf0"/><rect x="216" y="0" width="6" height="6" fill="#cfd0f6"/><rect x="222" y="0" width="6" height="6" fill="#d3d4f6"/><rect x="228" y="0" width="6" height="6" fill="#f2f3fc"/><rect x="234" y="0" width="6" height="6" fill="#d2d3f6"/><rect x="0" y="6" width="6" height="6" fill="#f2f3fc"/><rect x="6" y="6" width="6" height="6" fill="#e8e8fa"/><rect x="12" y="6" width="6" height="6" fill="#c3c4f4"/><rect x="18" y="6" width="6" height="6" fill="#eeeffb"/><rect x="24" y="6" width="6" height="6" fill="#eeeffb"/><rect x="30" y="6" width="6" height="6" fill="#bfc1f3"/><rect x="36" y="6" width="6" height="6" fill="#b3b5f1"/><rect x="42" y="6" width="6" height="6" fill="#ebebfa"/><rect x="48" y="6" width="6" height="6" fill="#ebebfa"/><rect x="54" y="6" width="6" height="6" fill="#ebebfa"/><rect x="60" y="6" width="6" height="6" fill="#ebebfa"/><rect x="66" y="6" width="6" height="6" fill="#ebebfa"/><rect x="72" y="6" width="6" height="6" fill="#ebebfa"/><rect x="78" y="6" width="6" height="6" fill="#ebebfa"/><rect x="84" y="6" width="6" height="6" fill="#ebebfa"/><rect x="90" y="6" width="6" height="6" fill="#ebebfa"/><rect x="96" y="6" width="6" height="6" fill="#ebebfa"/><rect x="102" y="6" width="6" height="6" fill="#ebebfa"/><rect x="108" y="6" width="6" height="6" fill="#ebebfa"/><rect x="114" y="6" width="6" height="6" fill="#ebebfa"/><rect x="120" y="6" width="6" height="6" fill="#ebebfa"/><rect x="126" y="6" width="6" height="6" fill="#ebebfa"/><rect x="132" y="6" width="6" height="6" fill="#ebebfa"/><rect x="138" y="6" width="6" height="6" fill="#ebebfa"/><rect x="144" y="6" width="6" height="6" fill="#ebebfa"/><rect x="150" y="6" width="6" height="6" fill="#ebebfa"/><rect x="156" y="6" width="6" height="6" fill="#ebebfa"/><rect x="162" y="6" width="6" height="6" fill="#ebebfa"/><rect x="168" y="6" width="6" height="6" fill="#ebebfa"/><rect x="174" y="6" width="6" height="6" fill="#ebebfa"/><rect x="180" y="6" width="6" height="6" fill="#ebebfa"/><rect x="186" y="6" width="6" height="6" fill="#ebebfa"/><rect x="192" y="6" width="6" height="6" fill="#ebebfa"/><rect x="198" y="6" width="6" height="6" fill="#ebebfa"/><rect x="204" y="6" width="6" height="6" fill="#ebebfa"/><rect x="210" y="6" width="6" height="6" fill="#ebebfa"/><rect x="216" y="6" width="6" height="6" fill="#ebebfa"/><rect x="222" y="6" width="6" height="6" fill="#ebebfa"/><rect x="228" y="6" width="6" height="6" fill="#ebebfa"/><rect x="234" y="6" width="6" height="6" fill="#ebebfa"/><rect x="240" y="6" width="6" height="6" fill="#ebebfa"/><rect x="246" y="6" width="6" height="6" fill="#ebebfa"/></svg><div class="a nw" style="left:20.5px;top:355.5px;font-size:11.3px;line-height:14px;color:#6366f1;font-weight:700">Tests</div>
<div class="a nw tb2" style="left:66.5px">Statistics</div>
<div class="a nw tb2" style="left:132.8px">Defects</div>
<div class="a" style="left:20.0px;top:378px;width:814px;height:1px;background:#f3f4f6"></div>
<div class="a" style="left:20.0px;top:377.6px;width:29.6px;height:2px;background:#6366f1"></div>

<div class="a chip" style="left:20.7px;width:70.3px">Passed&nbsp;<span style="color:#10b981">9</span></div>
<div class="a chip" style="left:97.0px;width:63.9px">Failed&nbsp;<span style="color:#ef4444">4</span></div>
<div class="a chip" style="left:166.5px;width:75.2px">Skipped&nbsp;<span style="color:#f59e0b">0</span></div>
<div class="a chip" style="left:247.4px;width:75.6px">Pending 0</div>
<div class="a chip" style="left:329.2px;width:45.9px;color:#6366f1"><svg width="12" height="12" viewBox="0 0 12 12" style="margin-right:5px;position:relative;top:1px"><path d="M1 1.2 H11 V8.6 H5 L2.4 11 V8.6 H1 Z" stroke="#374151" stroke-width="1.05" fill="none" stroke-linejoin="round"/><path d="M6 3 V5.6 M6 6.8 V7.4" stroke="#374151" stroke-width="1.05"/></svg>4</div>
<div class="a" style="left:384.3px;top:387.5px;width:152.7px;height:26.3px;border:1px solid #e5e7eb;border-radius:5px;background:#fff;overflow:hidden"><svg class="a" style="left:9px;top:7px" width="11" height="11" viewBox="0 0 11 11"><circle cx="4.6" cy="4.6" r="3.6" stroke="#6b7280" stroke-width="1.1" fill="none"/><path d="M7.3 7.3 L10 10" stroke="#6b7280" stroke-width="1.2" stroke-linecap="round"/></svg><span class="a nw" style="left:27.5px;top:6px;width:107px;overflow:hidden;font-size:10.4px;color:#4b5563;line-height:13px">Search by title/message</span></div>

<div class="a nw" style="left:20.7px;top:423.5px;font-size:11.9px;line-height:15px;color:#111827">sort by: <span class="lk">suite</span> / <span class="lk">testcase</span> / <span class="lk">failure</span></div>
<svg class="a" style="left:21.0px;top:452.5px" width="8.6" height="8.6"><use href="#passc"/></svg><svg class="a" style="left:37.0px;top:451.0px" width="11.5" height="11.5"><use href="#clip"/></svg><div class="a nw mono" style="left:55.0px;top:450.3px">@first Create Todos…</div><div class="a ib2" style="left:189.0px;top:450.2px"><svg width="9.5" height="9.5"><use href="#auto"/></svg></div><div class="a nw ttl" style="left:205.4px;top:449.8px">Create a new todo item</div>
<svg class="a" style="left:21.0px;top:474.8px" width="8.6" height="8.6"><use href="#passc"/></svg><svg class="a" style="left:37.0px;top:473.3px" width="11.5" height="11.5"><use href="#clip"/></svg><div class="a nw mono" style="left:55.0px;top:472.6px">@first Create Todos…</div><div class="a ib2" style="left:189.0px;top:472.5px"><svg width="9.5" height="9.5"><use href="#auto"/></svg></div><div class="a nw ttl" style="left:205.4px;top:472.1px">Create multiple todo items</div>
<svg class="a" style="left:21.0px;top:497.2px" width="8.6" height="8.6"><use href="#passc"/></svg><svg class="a" style="left:37.0px;top:495.7px" width="11.5" height="11.5"><use href="#clip"/></svg><div class="a nw mono" style="left:55.0px;top:495.0px">@first Create Todos…</div><div class="a ib2" style="left:189.0px;top:494.9px"><svg width="9.5" height="9.5"><use href="#auto"/></svg></div><div class="a nw ttl" style="left:205.4px;top:494.5px">Todos containing weird characters</div>
<svg class="a" style="left:21.0px;top:519.5px" width="8.6" height="8.6"><use href="#passc"/></svg><svg class="a" style="left:37.0px;top:518.0px" width="11.5" height="11.5"><use href="#clip"/></svg><div class="a nw mono" style="left:55.0px;top:517.3px">@first Create Todos…</div><div class="a ib2" style="left:189.0px;top:517.2px"><svg width="9.5" height="9.5"><use href="#auto"/></svg></div><div class="a nw ttl" style="left:205.4px;top:516.8px">Todos containing weird characters</div>
<svg class="a" style="left:21.0px;top:541.8px" width="8.6" height="8.6"><use href="#passc"/></svg><svg class="a" style="left:37.0px;top:540.3px" width="11.5" height="11.5"><use href="#clip"/></svg><div class="a nw mono" style="left:55.0px;top:539.6px">@first Create Todos…</div><div class="a ib2" style="left:189.0px;top:539.5px"><svg width="9.5" height="9.5"><use href="#auto"/></svg></div><div class="a nw ttl" style="left:205.4px;top:539.1px">Todos containing weird characters</div>
<svg class="a" style="left:21.0px;top:564.2px" width="8.6" height="8.6"><use href="#passc"/></svg><svg class="a" style="left:37.0px;top:562.7px" width="11.5" height="11.5"><use href="#clip"/></svg><div class="a nw mono" style="left:55.0px;top:562.0px">@first Create Todos…</div><div class="a ib2" style="left:189.0px;top:561.9px"><svg width="9.5" height="9.5"><use href="#auto"/></svg></div><div class="a nw ttl" style="left:205.4px;top:561.5px">Text input field should be cleared after each item</div>
<svg class="a" style="left:21.0px;top:586.5px" width="8.6" height="8.6"><use href="#failc"/></svg><svg class="a" style="left:37.0px;top:585.0px" width="11.5" height="11.5"><use href="#clip"/></svg><div class="a nw mono" style="left:55.0px;top:584.3px">@first Create Todos…</div><div class="a ib2" style="left:189.0px;top:584.2px"><svg width="9.5" height="9.5"><use href="#auto"/></svg></div><div class="a nw ttl" style="left:205.4px;top:583.8px">Text input should be trimmed</div>
<svg class="a" style="left:21.0px;top:608.8px" width="8.6" height="8.6"><use href="#failc"/></svg><svg class="a" style="left:37.0px;top:607.3px" width="11.5" height="11.5"><use href="#clip"/></svg><div class="a nw mono" style="left:55.0px;top:606.6px">@first Create Todos…</div><div class="a ib2" style="left:189.0px;top:606.5px"><svg width="9.5" height="9.5"><use href="#auto"/></svg></div><div class="a nw ttl" style="left:205.4px;top:606.1px">New todos should be added to the bottom of the list</div>
<svg class="a" style="left:21.0px;top:631.1px" width="8.6" height="8.6"><use href="#passc"/></svg><svg class="a" style="left:37.0px;top:629.6px" width="11.5" height="11.5"><use href="#clip"/></svg><div class="a nw mono" style="left:55.0px;top:628.9px">@first Create Todos…</div><div class="a ib2" style="left:189.0px;top:628.8px"><svg width="9.5" height="9.5"><use href="#auto"/></svg></div><div class="a nw ttl" style="left:205.4px;top:628.4px">Footer should be visible when adding TODOs</div>
<svg class="a" style="left:21.0px;top:653.5px" width="8.6" height="8.6"><use href="#passc"/></svg><svg class="a" style="left:37.0px;top:652.0px" width="11.5" height="11.5"><use href="#clip"/></svg><div class="a nw mono" style="left:55.0px;top:651.3px">Mark as completed/n…</div><div class="a ib2" style="left:189.0px;top:651.2px"><svg width="9.5" height="9.5"><use href="#auto"/></svg></div><div class="a nw ttl" style="left:205.4px;top:650.8px">Mark todos as completed</div>
<svg class="a" style="left:21.0px;top:675.8px" width="8.6" height="8.6"><use href="#passc"/></svg><svg class="a" style="left:37.0px;top:674.3px" width="11.5" height="11.5"><use href="#clip"/></svg><div class="a nw mono" style="left:55.0px;top:673.6px">Mark as completed/n…</div><div class="a ib2" style="left:189.0px;top:673.5px"><svg width="9.5" height="9.5"><use href="#auto"/></svg></div><div class="a nw ttl" style="left:205.4px;top:673.1px">Unmark completed todos</div>
<svg class="a" style="left:21.0px;top:698.1px" width="8.6" height="8.6"><use href="#failc"/></svg><svg class="a" style="left:37.0px;top:696.6px" width="11.5" height="11.5"><use href="#clip"/></svg><div class="a nw mono" style="left:55.0px;top:695.9px">Mark as completed/n…</div><div class="a ib2" style="left:189.0px;top:695.8px"><svg width="9.5" height="9.5"><use href="#auto"/></svg></div><div class="a nw ttl" style="left:205.4px;top:695.4px">Mark all todos as completed</div>

<div class="a" style="left:829.0px;top:444.5px;width:3.2px;height:243.5px;background:#c7d2fe;border-radius:2px"></div>
</div>
</body></html>
